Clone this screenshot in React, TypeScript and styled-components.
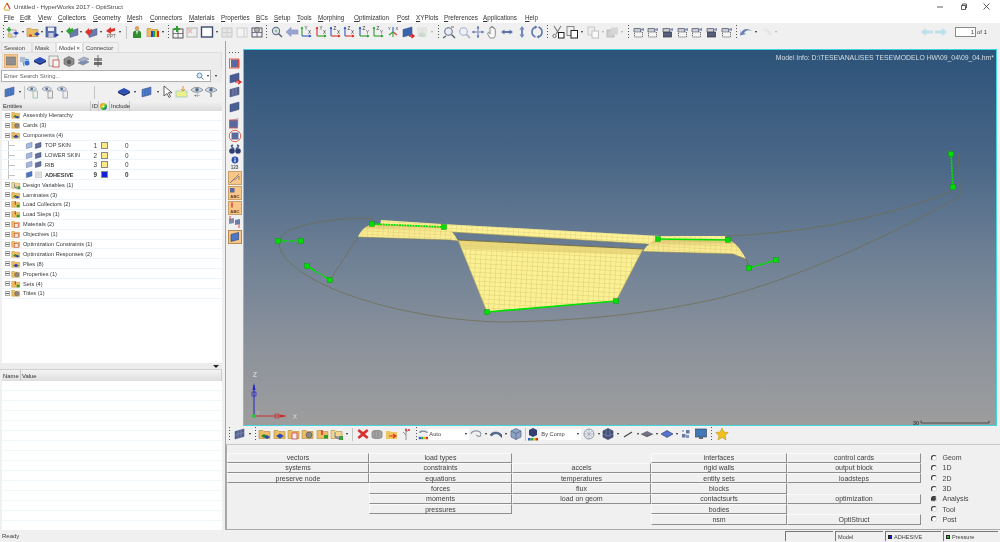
import React from 'react';
import styled, { createGlobalStyle } from 'styled-components';

const Global = createGlobalStyle`
  html, body { margin: 0; padding: 0; width: 1000px; height: 542px; overflow: hidden; background: #f0f0f0; }
  body { font-family: "Liberation Sans", Arial, sans-serif; color: #333; }
  #root { width: 1000px; height: 542px; }
`;

const Page = styled.div`display:flex;flex-direction:column;width:1000px;height:542px;background:#f0f0f0;filter:blur(.3px);`;
const TitleBar = styled.div`height:11px;background:#fff;display:flex;align-items:center;padding-left:3px;gap:3px;font-size:6.2px;color:#444;padding-top:1px;`;
const WinControls = styled.div`margin-left:auto;display:flex;gap:14px;padding-right:9px;align-items:center;`;
const MenuBar = styled.div`height:11px;background:#fff;display:flex;align-items:center;padding-left:4px;font-size:6.3px;color:#333;`;
const MenuItem = styled.span<{ $w: number }>`width:${p => p.$w}px;white-space:nowrap;`;
const TopBar = styled.div`height:18px;display:flex;align-items:center;background:#f0f0f0;`;
const Slot = styled.div<{ $w: number; $dim?: boolean }>`
  width:${p => p.$w}px;flex:none;display:flex;align-items:center;justify-content:center;height:15px;
  opacity:${p => (p.$dim ? 0.35 : 1)};
  svg{flex:none;}
`;
const Caret = styled.div`width:0;height:0;border-left:1.5px solid transparent;border-right:1.5px solid transparent;border-top:2px solid #222;`;
const Grip = styled.div`width:1px;height:14px;background:repeating-linear-gradient(to bottom,#555 0 1px,transparent 1px 3px);`;
const Sep = styled.div`width:1px;height:13px;background:#c4c4c4;`;
const Pager = styled.div`margin-left:auto;display:flex;align-items:center;padding-right:13px;font-size:6px;color:#444;`;
const PagerInput = styled.div`width:18px;height:8px;margin:0 1px 0 7px;background:#fff;border:1px solid #8a8a8a;text-align:right;line-height:8px;padding-right:1px;box-sizing:content-box;font-size:6px;`;

const Body = styled.div`flex:1;display:flex;min-height:0;`;
const LeftCol = styled.div`flex:none;display:flex;flex-direction:column;border-right:1px solid #a4a4a4;padding-right:3px;box-sizing:content-box;width:222px;`;
const TabRow = styled.div`height:11px;display:flex;align-items:flex-end;padding-left:1px;font-size:5.9px;color:#444;`;
const Tab = styled.div<{ $w: number; $on?: boolean }>`
  width:${p => p.$w}px;height:10px;display:flex;align-items:center;padding-left:2px;box-sizing:border-box;
  background:${p => (p.$on ? '#fbfbfb' : '#f0f0f0')};border:1px solid #e0e0e0;border-bottom:none;justify-content:space-between;padding-right:2px;
`;
const IconStrip = styled.div`height:17px;display:flex;align-items:center;background:#ececec;margin-left:2px;border:1px solid #dedede;border-bottom:none;box-sizing:border-box;`;
const SearchRow = styled.div`height:14px;display:flex;align-items:center;background:#ececec;padding:0 2px 0 1px;`;
const SearchBox = styled.div`width:210px;height:12px;background:#fff;border:1px solid #b0b0b0;box-sizing:border-box;display:flex;align-items:center;justify-content:space-between;padding:0 1px 0 2px;font-size:5.9px;color:#666;`;
const SearchTail = styled.div`flex:none;display:flex;align-items:center;gap:3px;`;
const EntityTools = styled.div`height:18px;display:flex;align-items:center;background:#f0f0f0;padding-left:3px;`;
const GridHead = styled.div`height:10px;display:flex;align-items:center;background:linear-gradient(#f2f2f2,#dcdcdc);font-size:5.9px;color:#333;margin-left:2px;`;
const HeadCell = styled.div<{ $w: number }>`width:${p => p.$w}px;flex:none;height:100%;display:flex;align-items:center;padding-left:1px;box-sizing:border-box;border-right:1px solid #c8c8c8;`;
const TreeBox = styled.div`height:252px;background:#fff;margin-left:2px;box-sizing:border-box;`;
const Row = styled.div<{ $bold?: boolean }>`
  height:9.9px;display:flex;align-items:center;position:relative;font-size:5.6px;color:#3a3a3a;
  font-weight:${p => (p.$bold ? 700 : 400)};border-bottom:1px solid #eef5fa;box-sizing:border-box;
`;
const Expander = styled.div`width:5px;height:5px;margin:0 0 0 3px;border:1px solid #aaa;box-sizing:border-box;position:relative;flex:none;background:#fff;
  &::after{content:'';position:absolute;left:0;right:0;top:1px;height:1px;background:#666;}
`;
const Guide = styled.div`width:16px;height:100%;margin-left:6px;flex:none;border-left:1px solid #c4c4c4;position:relative;
  &::after{content:'';position:absolute;left:0;top:50%;width:6px;height:1px;background:#c4c4c4;}
`;
const CompIcon = styled.svg`width:9px;height:9px;flex:none;`;
const TreeIcon = styled.svg`width:10px;height:10px;flex:none;margin:0 2px 0 1px;`;
const RowLabel = styled.span<{ $w: number }>`width:${p => p.$w}px;flex:none;white-space:nowrap;margin-left:${p => (p.$w < 100 ? 2 : 0)}px;`;
const IdCell = styled.span`width:9px;text-align:right;flex:none;font-size:6.4px;`;
const Swatch = styled.div<{ $c: string }>`width:7px;height:7px;margin-left:4px;background:${p => p.$c};border:1px solid #888;box-sizing:border-box;flex:none;`;
const IncludeCell = styled.span`margin-left:17px;font-size:6.4px;`;
const Divider = styled.div`height:6px;display:flex;justify-content:flex-end;align-items:center;padding-right:3px;background:#ececec;border-bottom:1px solid #cfcfcf;`;
const DownMark = styled.div`width:0;height:0;border-left:3px solid transparent;border-right:3px solid transparent;border-top:3px solid #222;`;
const NameHead = styled(GridHead)`height:11px;background:linear-gradient(#f4f4f4,#dedede);`;
const NameBody = styled.div`flex:1;margin-left:2px;background:repeating-linear-gradient(to bottom,#fff 0 9px,#f0f7fa 9px 10px);`;

const RightCol = styled.div`flex:1;display:flex;flex-direction:column;min-width:0;`;
const Gutter = styled.div`height:8px;flex:none;`;
const ViewRow = styled.div`height:377px;flex:none;display:flex;`;
const VBar = styled.div`width:17px;flex:none;display:flex;flex-direction:column;align-items:center;background:#f0f0f0;`;
const VSlot = styled.div<{ $h: number }>`height:${p => p.$h}px;width:100%;flex:none;display:flex;align-items:center;justify-content:center;`;
const HGrip = styled.div`width:12px;height:1px;background:repeating-linear-gradient(to right,#555 0 1px,transparent 1px 3px);`;
const Small123 = styled.div`font-size:4.6px;font-weight:700;color:#555;line-height:5px;text-align:center;`;
const Viewport = styled.div`
  width:754px;flex:none;position:relative;box-sizing:border-box;border:1px solid #42d6de;overflow:hidden;
  background:linear-gradient(to bottom,#2c5379 0%,#4a6787 30%,#6e8095 55%,#8d939c 80%,#9d9d9d 100%);
`;
const Canvas = styled.svg`display:block;width:752px;height:375px;`;
const ModelInfo = styled.div`position:absolute;top:3.5px;right:2px;font-size:6.85px;color:#d8dfe6;white-space:nowrap;`;
const LowBar = styled.div`height:18px;flex:none;display:flex;align-items:center;padding-bottom:2px;box-sizing:border-box;`;
const Combo = styled.div`width:41px;height:11px;flex:none;background:#fff;display:flex;align-items:center;justify-content:space-between;padding:0 2px 0 1px;box-sizing:border-box;font-size:5.7px;color:#444;`;
const PanelArea = styled.div`flex:1;display:flex;margin-top:0;border-top:1px solid #c8c8c8;`;
const MainPanel = styled.div`flex:1;display:flex;padding:7.5px 0 0 0;border-bottom:1px solid #aaa;border-left:1px solid #aaa;`;
const BtnGrid = styled.div`
  display:grid;grid-auto-flow:column;grid-template-columns:142px 143px 139px 136px 134px;grid-template-rows:repeat(7,10.3px);
  width:694px;flex:none;height:73px;
`;
const Btn = styled.div<{ $flat?: boolean }>`
  display:flex;align-items:center;justify-content:center;font-size:7px;color:#3f3f3f;box-sizing:border-box;
  ${p => (p.$flat ? '' : 'border-right:1px solid #8e8e8e;border-bottom:1px solid #8e8e8e;border-top:1px solid #fafafa;border-left:1px solid #fafafa;')}
`;
const Radios = styled.div`display:grid;grid-auto-rows:10.3px;padding-left:8px;`;
const RadioRow = styled.div`display:flex;align-items:center;font-size:7px;color:#444;gap:5.5px;`;
const Radio = styled.div<{ $on?: boolean }>`
  width:4px;height:4px;border-radius:50%;background:${p => (p.$on ? '#444' : '#fff')};flex:none;
  border-left:1px solid #333;border-top:1px solid #333;border-right:1px solid #ddd;border-bottom:1px solid #ddd;box-sizing:content-box;margin-left:2px;
`;
const StatusBar = styled.div`height:12px;flex:none;display:flex;align-items:center;font-size:6px;color:#444;`;
const StatusText = styled.div`margin-right:auto;padding-left:2px;`;
const StatusCell = styled.div<{ $w: number }>`
  width:${p => p.$w}px;height:10px;margin-right:2px;flex:none;display:flex;align-items:center;gap:2px;padding-left:2px;box-sizing:border-box;font-size:5.6px;
  border-left:1px solid #777;border-top:1px solid #777;
`;
const StatusDot = styled.div<{ $c: string }>`width:4px;height:4px;background:${p => p.$c};border:0.5px solid #222;box-sizing:border-box;`;

const S = 14;
const Ic: React.FC<{ children: React.ReactNode; s?: number }> = ({ children, s = S }) => (
  <svg width={s} height={s} viewBox="0 0 14 14">{children}</svg>
);
const Plate = ({ c = '#5a74b4' }: { c?: string }) => <path d="M2 4.5 11 2v7.5L2 12z" fill={c} stroke="#3a4b80" strokeWidth=".5" />;
const Folder = ({ c = '#eebd63' }: { c?: string }) => <path d="M1 3.5h4l1 1h6v7H1z" fill={c} stroke="#b08a3a" strokeWidth=".6" />;
const Axes = ({ v, h, lv, lh }: { v: string; h: string; lv: string; lh: string }) => (
  <Ic>
    <path d="M3 2v9" fill="none" stroke={v} strokeWidth="1.1" />
    <path d="M3 11h9" stroke={h} strokeWidth="1.1" />
    <path d="M1.6 4 3 1.5 4.4 4z" fill={v} /><path d="M10 9.6 12.6 11 10 12.4z" fill={h} />
    <text x="5.5" y="4.5" fontSize="4.5" fill="#333" fontFamily="Liberation Sans">{lv}</text>
    <text x="9" y="9" fontSize="4.5" fill="#333" fontFamily="Liberation Sans">{lh}</text>
  </Ic>
);
const Eye = ({ t }: { t?: string }) => (
  <Ic>
    <path d="M1 5c3-3.500 8-3.500 12 0-4 3-9 3-12 0z" fill="#d8dde4" stroke="#5e6f80" strokeWidth=".7" />
    <circle cx="7" cy="4.800" r="1.800" fill="#4f6a8c" />
    {t && <text x="7" y="12" fontSize="4.500" textAnchor="middle" fill="#444" fontFamily="Liberation Sans">{t}</text>}
  </Ic>
);
const EyeDoc = ({ g }: { g: string }) => (
  <Ic>
    <path d="M0 4c2.500-3 7-3 9.500 0-2.500 2.500-7 2.500-9.500 0z" fill="#dfe3e8" stroke="#69788a" strokeWidth=".6" />
    <circle cx="4.700" cy="3.800" r="1.400" fill="#5a7293" />
    <rect x="6" y="6" width="4.500" height="7" fill="#eee" stroke={g} strokeWidth=".7" />
  </Ic>
);
const Cam = ({ dark }: { dark?: boolean }) => (
  <Ic>
    <path d="M2 7V3.500h6.500V7" fill="#c7ccd6" stroke="#4c4f5c" strokeWidth=".7" />
    <path d="M8.500 4 12 3v3l-3.500-1z" fill="#7d8db8" />
    <rect x="2.500" y="7" width="8" height="5" fill={dark ? '#55607e' : '#f5f5f5'} stroke="#333" strokeWidth=".7" strokeDasharray={dark ? undefined : '1.200 .8'} />
  </Ic>
);

const icons: Record<string, React.ReactNode> = {
  imp: <Ic><rect x="3" y="5" width="7" height="7" fill="#e6e6ec" stroke="#666" strokeWidth=".5" /><path d="M3 2v4M1 4l2 2 2-2" stroke="#2da52d" fill="none" strokeWidth="1.400" /><path d="M7 8 10 6.500 13 8l-3 2z" fill="#2a4bb0" /><rect x="2" y="9" width="4" height="3" fill="#f2cf6c" stroke="#997" strokeWidth=".4" /></Ic>,
  open: <Ic><Folder /><path d="M8 9l3-2 3 2-3 2z" fill="#2a4bb0" /><path d="M3 9.500h3v2H3z" fill="#d8402a" /></Ic>,
  save: <Ic><rect x="1" y="2" width="10" height="10" fill="#5a74b4" stroke="#2e3f78" strokeWidth=".6" /><rect x="3" y="2.500" width="6" height="3.500" fill="#f0f0f4" /><rect x="3.500" y="8" width="5" height="4" fill="#ccd" /><path d="M9 10l2.500-1.500L14 10l-2.500 1.500z" fill="#263f9f" /></Ic>,
  plateG: <Ic><path d="M5 6l8-2.500V10L5 12.500z" fill="#6c79ac" stroke="#3a4b80" strokeWidth=".4" /><path d="M1 6l4-4v2l3-1v4l-3 1v2z" fill="#2fa52f" /></Ic>,
  plateR: <Ic><path d="M5 6l8-2.500V10L5 12.500z" fill="#6c79ac" stroke="#3a4b80" strokeWidth=".4" /><path d="M1 7l4-4v2l3-1v4l-3 1v2z" fill="#d9352c" /></Ic>,
  ppt: <Ic><path d="M2 6l5-4v2l4-1v3l-4 1v2z" fill="#d9352c" /><text x="7.500" y="13" fontSize="4.500" textAnchor="middle" fill="#555" fontFamily="Liberation Sans">PPT</text></Ic>,
  person: <Ic><circle cx="7" cy="3.200" r="2.200" fill="#d8a468" /><path d="M3 13V8c0-2 2-2.500 4-2.500s4 .5 4 2.500v5z" fill="#2f8f2f" /><path d="M6 6h2l-1 4z" fill="#eee" /></Ic>,
  fcolor: <Ic><Folder /><rect x="5" y="6" width="2" height="6" fill="#2343c8" /><rect x="7" y="6" width="2" height="6" fill="#23a840" /><rect x="9" y="6" width="2" height="6" fill="#e8c820" /><rect x="11" y="6" width="2" height="6" fill="#d82a20" /></Ic>,
  gridPlus: <Ic><rect x="2" y="4" width="10" height="9" fill="#f4f4f8" stroke="#333" strokeWidth=".8" /><path d="M7 4v9M2 8.500h10" stroke="#333" strokeWidth=".6" /><path d="M6 1v6M3 4h6" stroke="#2d9f2d" strokeWidth="2" /></Ic>,
  gridX: <Ic><rect x="2" y="3" width="10" height="9" fill="#efefef" stroke="#b0b0b0" /><path d="M3 4l4 4m0-4L3 8" stroke="#e9b9b9" strokeWidth="1.400" /></Ic>,
  square: <Ic><rect x="1.500" y="2" width="11" height="10" fill="#fff" stroke="#3b4a72" strokeWidth="1.400" /></Ic>,
  dis1: <Ic><rect x="2" y="3" width="10" height="9" fill="#e6e6e6" stroke="#c6c6c6" /><path d="M7 4v7M3 7.500h8" stroke="#cfcfcf" /></Ic>,
  dis2: <Ic><rect x="2" y="3" width="10" height="9" fill="#f4f4f4" stroke="#cdcdcd" /><path d="M9 3v9" stroke="#cdcdcd" /></Ic>,
  gridGear: <Ic><rect x="2" y="3" width="10" height="9" fill="#eef" stroke="#333" strokeWidth=".8" /><path d="M7 3v9M2 7.500h10" stroke="#333" strokeWidth=".6" /><circle cx="7" cy="5" r="2.600" fill="#aaa" stroke="#555" strokeWidth=".6" /></Ic>,
  zoomIn: <Ic><circle cx="6" cy="6" r="3.600" fill="#e3e8f0" stroke="#68708a" strokeWidth="1.100" /><path d="M8.500 8.500 12 12" stroke="#5c6270" strokeWidth="1.500" /><path d="M4.500 6h3M6 4.500v3" stroke="#4a5" strokeWidth=".6" /></Ic>,
  diamond: <Ic><path d="M1 7 6 2.500v2.400h7v4.200H6v2.400z" fill="#9aa6d0" stroke="#7a84b0" strokeWidth=".5" /></Ic>,
  triad: <Ic><path d="M7 7V2" stroke="#2b5fcf" strokeWidth="1.100" /><path d="M7 7l4 3" stroke="#d33" strokeWidth="1.100" /><path d="M7 7l-4 3" stroke="#2da52d" strokeWidth="1.100" /><path d="M7 7v5" stroke="#2da52d" strokeWidth="1.100" /><text x="2" y="5" fontSize="4" fill="#333" fontFamily="Liberation Sans">Y</text><text x="9.500" y="5" fontSize="4" fill="#333" fontFamily="Liberation Sans">X</text></Ic>,
  plateArrow: <Ic><Plate c="#3a63ad" /><path d="M8 11h5M10.500 9l2.500 2-2.500 2" stroke="#d92020" strokeWidth="1.300" fill="none" /></Ic>,
  disPerson: <Ic><rect x="2" y="2" width="10" height="10" fill="#cdd7cd" /><path d="M4 12V9c0-2 6-2 6 0v3z" fill="#8fb08f" /><circle cx="7" cy="5" r="2" fill="#d8c8b0" /></Ic>,
  zoomF: <Ic><circle cx="6.500" cy="6.500" r="3.800" fill="#e7ecf3" stroke="#6a7390" strokeWidth="1.100" /><path d="M4 11 1 13M9.500 9.500 13 13" stroke="#515a70" strokeWidth="1.300" /><path d="M9 2h3" stroke="#333" strokeWidth=".7" /></Ic>,
  zoomS: <Ic><circle cx="6.500" cy="6.500" r="3.800" fill="#eef1f7" stroke="#a6b0c8" strokeWidth="1.100" /><path d="M9.500 9.500 13 13" stroke="#99a3bc" strokeWidth="1.300" /></Ic>,
  cross: <Ic><path d="M7 1v12M1 7h12" stroke="#7b8ebb" strokeWidth="1.100" /><path d="M7 1 5.600 3.500h2.800zM7 13l-1.400-2.500h2.800zM1 7l2.500-1.400v2.800zM13 7l-2.500-1.400v2.800z" fill="#5e77ac" /></Ic>,
  hand: <Ic><path d="M4 13C2 10 1 8 2 7.500s2 1.500 2 1.500V3c0-1 1.300-1 1.300 0v-1c0-1 1.400-1 1.400 0v1c0-1 1.300-1 1.300 0v1c0-1 1.300-.8 1.300.2V9c0 2-.5 3-1 4z" fill="#f7f7f7" stroke="#666" strokeWidth=".7" /></Ic>,
  lr: <Ic><path d="M1 7l3.500-2.500v1.500h5V4.500L13 7 9.500 9.500V8h-5v1.500z" fill="#5e74ad" /></Ic>,
  ud: <Ic><path d="M7 1l2.500 3.500H8v5h1.500L7 13 4.500 9.500H6v-5H4.500z" fill="#7286bb" /></Ic>,
  rot: <Ic><path d="M5.500 2C3 3 2 5 2 7s1 4 3.500 5M8.500 2C11 3 12 5 12 7s-1 4-3.500 5" fill="none" stroke="#5d74ad" strokeWidth="1.600" /><path d="M5 .5 7.500 2 5 4zM9 10l-2.500 2L9 13.500z" fill="#5d74ad" /></Ic>,
  cut: <Ic><path d="M3 1l5 8M10 1 5 9" stroke="#777" strokeWidth="1.100" /><circle cx="3.500" cy="11" r="1.700" fill="none" stroke="#777" /><rect x="7.500" y="7.500" width="5.500" height="5.500" fill="#fff" stroke="#222" /></Ic>,
  copy: <Ic><rect x="2" y="1.500" width="7" height="9" fill="#eee" stroke="#888" /><rect x="6" y="5.500" width="6.500" height="7.500" fill="#fff" stroke="#222" /></Ic>,
  dis3: <Ic><rect x="2" y="2" width="6.500" height="8" fill="#eee" stroke="#c8c8c8" /><rect x="6" y="6" width="6.500" height="7" fill="#fafafa" stroke="#c0c0c0" /></Ic>,
  dis4: <Ic><rect x="2" y="5" width="7" height="7" fill="#cfcfcf" stroke="#bdbdbd" /><rect x="6" y="2.500" width="7" height="7" fill="#d6d6d6" /></Ic>,
  undo: <Ic><path d="M2 8c2-5 7-5 11-2-4-1.500-6-1-8 2l2 1-6 1.500L2 5z" fill="#6b7fb4" /></Ic>,
  redo: <Ic><path d="M12 8c-2-5-7-5-11-2 4-1.500 6-1 8 2l-2 1 6 1.500L12 5z" fill="#cfd4de" /></Ic>,
  boxFile: <Ic><Folder /><path d="M3 9l3-2 3 2-3 2z" fill="#2a8f2a" /><path d="M6 10l3-2 3 2-3 2z" fill="#2a4bb0" /></Ic>,
  boxFile2: <Ic><Folder /><path d="M3 9l4-2.500L11 9l-4 2.500z" fill="#2a4bb0" /></Ic>,
  boxMat: <Ic><Folder /><rect x="5" y="6" width="5" height="6" fill="#eee" stroke="#c33" strokeWidth=".7" /></Ic>,
  boxProp: <Ic><Folder /><circle cx="8" cy="8" r="3" fill="#888" stroke="#444" strokeWidth=".5" /></Ic>,
  boxLoad: <Ic><Folder /><path d="M6 3v5" stroke="#d22" strokeWidth="1.400" /><rect x="8" y="8" width="4" height="3.500" fill="#2a9f2a" /></Ic>,
  boxSys: <Ic><Folder c="#f2d68d" /><path d="M5 5v5l4 2M5 10h4" stroke="#3158b8" strokeWidth=".7" fill="none" /><rect x="9" y="9" width="4" height="4" fill="#3f9f3f" /></Ic>,
  red: <Ic><path d="M3 2l4 3 4-3 1.500 2L9 7l3.500 3L11 12 7 9l-4 3-1.500-2L5 7 1.500 4z" fill="#d93030" /></Ic>,
  cyl: <Ic><path d="M2 5c0-2 10-2 10 0v5c0 2-10 2-10 0z" fill="#a4a4a4" stroke="#666" strokeWidth=".6" /><path d="M5 3.500v7M8 3.500v7" stroke="#777" strokeWidth=".5" /></Ic>,
  orangeBox: <Ic><path d="M1 4h4l1 1h6v7H1z" fill="#f0c660" /><path d="M4 9h6M8 7l3 2-3 2" stroke="#d8341f" fill="none" strokeWidth="1.100" /></Ic>,
  branch: <Ic><path d="M7 1v12M7 5l3-2M7 8 4 5" stroke="#7a7a7a" strokeWidth=".8" /><circle cx="7" cy="3" r="1.100" fill="#d33" /><circle cx="10" cy="3" r="1" fill="#d33" /></Ic>,
  loop: <Ic><path d="M2 7c0-3 6-4 9-2 2 2 0 5-1 4.500S7 8 7 8" fill="none" stroke="#8d98a8" strokeWidth="1.100" /></Ic>,
  shell: <Ic><path d="M1 8c2-4 9-4 12 0l-2 1c-2-3-6-3-8 0z" fill="#4e6a90" stroke="#3a4d6e" strokeWidth=".5" /><path d="M11 9 13 8v3z" fill="#384f75" /></Ic>,
  cube: <Ic><path d="M2 4l5-2.500L12 4v6l-5 2.500L2 10z" fill="#8fa3c4" stroke="#46587c" strokeWidth=".6" /><path d="M2 4l5 2.500L12 4M7 6.500v6" stroke="#46587c" strokeWidth=".6" fill="none" /></Ic>,
  sphere: <Ic><circle cx="7" cy="7" r="5" fill="#e7eaef" stroke="#6f7b8d" strokeWidth=".7" /><path d="M2 7h10M7 2v10M3.500 3.500 10.500 10.500M10.500 3.500 3.500 10.500" stroke="#8e97a4" strokeWidth=".5" /></Ic>,
  darkCube: <Ic><path d="M2 4l5-2.500L12 4v6l-5 2.500L2 10z" fill="#47537e" stroke="#2a3356" strokeWidth=".6" /><path d="M5 3v7M9 3v7M2 7l5 2 5-2" stroke="#8b93b5" strokeWidth=".5" fill="none" /></Ic>,
  dash: <Ic><path d="M3 10 11 5" stroke="#444" strokeWidth="1.200" /></Ic>,
  flatGray: <Ic><path d="M1 7 7 4l6 3-6 3z" fill="#6f7480" /><path d="M1 7l6 2.500L13 7" stroke="#444" fill="none" strokeWidth=".6" /></Ic>,
  flatBlue: <Ic><path d="M1 7 7 3.500 13 7 7 10.500z" fill="#5873c9" stroke="#2d3c79" strokeWidth=".6" /></Ic>,
  quads: <Ic><rect x="2" y="7" width="3.500" height="3.500" fill="#6679a6" /><rect x="6" y="3" width="3.500" height="3.500" fill="#6679a6" /><rect x="6" y="8" width="3" height="3" fill="#8494bd" /><rect x="2" y="3" width="2" height="2" fill="#a7b2cf" /></Ic>,
  monitor: <Ic><rect x="1.500" y="2" width="11" height="8" fill="#3f78b5" stroke="#3b4a66" strokeWidth=".7" /><rect x="5" y="10" width="4" height="2" fill="#667" /></Ic>,
  star: <Ic><path d="M7 1l1.900 4 4.400.5-3.200 3 .9 4.300L7 10.600 3 12.800l.9-4.300-3.200-3 4.400-.5z" fill="#f0c020" stroke="#b08a10" strokeWidth=".5" /></Ic>,
  comboIcon: <Ic s={11}><path d="M1 4c2-3 8-3 12 0l-2 1c-3-2-6-2-8 0z" fill="#7d8da6" /><rect x="1" y="10" width="3" height="3" fill="#2f5fc0" /><rect x="4" y="10" width="3" height="3" fill="#2fa840" /><rect x="7" y="10" width="3" height="3" fill="#e0c020" /><rect x="10" y="10" width="3" height="3" fill="#d83020" /></Ic>,
  comboIcon2: <Ic><path d="M3 3l4-2 4 2v5l-4 2-4-2z" fill="#343f70" /><rect x="2" y="11" width="2.500" height="2.500" fill="#2f5fc0" /><rect x="4.500" y="11" width="2.500" height="2.500" fill="#2fa840" /><rect x="7" y="11" width="2.500" height="2.500" fill="#e0c020" /><rect x="9.500" y="11" width="2.500" height="2.500" fill="#d83020" /></Ic>,
  plateSolid: <Ic><Plate c="#56638f" /><path d="M5 3.800v7M8 3v7.500M2 8l9-2.500" stroke="#8e98b8" strokeWidth=".5" /></Ic>,
  plateLight: <Ic><Plate c="#a9bde2" /><path d="M5 3.800v7M8 3v7.500" stroke="#8ea3cc" strokeWidth=".5" /></Ic>,
  activeBox: <Ic><rect x="0" y="0" width="14" height="14" fill="#f5c58e" stroke="#e2a45e" /><rect x="2.500" y="3" width="9" height="8" fill="#8f8f8f" stroke="#666" strokeWidth=".5" /></Ic>,
  net: <Ic><rect x="2" y="3" width="5" height="5" fill="#b3bdd2" /><circle cx="9" cy="9" r="2.500" fill="#3b6bd0" /><path d="M7 5l4 1M5 8l1 4" stroke="#1ba0d8" /></Ic>,
  eyeDis: <Ic><path d="M1 6l6-3 6 3-6 3z" fill="#2a4fb8" /><path d="M1 6v2l6 3 6-3V6L7 9z" fill="#1b2f78" /></Ic>,
  matBox: <Ic><rect x="2" y="2" width="9" height="10" fill="#eee" stroke="#7a7a7a" strokeWidth=".6" /><rect x="6" y="6" width="6" height="7" fill="#f6f6f6" stroke="#c0302a" strokeWidth=".7" /></Ic>,
  gearBox: <Ic><path d="M2 5l5-2.500L12 5v5l-5 2.500L2 10z" fill="#8f8f8f" stroke="#444" strokeWidth=".5" /><circle cx="7" cy="8" r="2.200" fill="#5b5b5b" /></Ic>,
  sheets: <Ic><path d="M2 9l6-3 5 2-6 3z" fill="#7d8fb8" stroke="#566" strokeWidth=".4" /><path d="M2 6l6-3 5 2-6 3z" fill="#a8b4cf" stroke="#667" strokeWidth=".4" /></Ic>,
  stack: <Ic><path d="M3 4h8v3H3z" fill="#8e8e8e" /><path d="M3 8h8v3H3z" fill="#6e6e6e" /><path d="M7 1v12" stroke="#555" strokeWidth=".8" /></Ic>,
  cursor: <Ic><path d="M3 1v10l3-2.500 2 4 1.500-1-2-3.800h3.500z" fill="#fff" stroke="#222" strokeWidth=".7" /></Ic>,
  yellowTag: <Ic><rect x="1" y="6" width="11" height="6" fill="#eef08a" stroke="#9cc" strokeWidth=".8" /><path d="M8 1v5M6 4l2 2 2-2" stroke="#e09030" strokeWidth="1" fill="none" /></Ic>,
  eyeQ: <EyeDoc g="#90b090" />,
  eyeQ2: <EyeDoc g="#808080" />,
  eyeQ3: <EyeDoc g="#9090c0" />,
  eye1: <Eye t="+/-" />,
  eye2: <Eye t="9" />,
  plate: <Ic><Plate c="#4f7cc6" /><path d="M5 3.800v7M8 3v7.500" stroke="#2f5ba0" strokeWidth=".5" /></Ic>,
  panelPlate: <Ic><rect x="3" y="3.500" width="8.500" height="8" fill="#5b6a9e" /><rect x="1.500" y="3" width="9" height="9" fill="none" stroke="#ea4a3a" strokeWidth=".9" /></Ic>,
  panelPlate2: <Ic><Plate c="#4a5a92" /><path d="M7 11h6M10 9l3 2-3 2" stroke="#e02020" strokeWidth="1.200" fill="none" /></Ic>,
  panelPlate3: <Ic><Plate c="#55618f" /><path d="M5 3.800v7M8 3v7.500" stroke="#a5adc6" strokeWidth=".5" /></Ic>,
  panelPlate4: <Ic><Plate c="#475692" /><path d="M4 3.800v7M6 3.300v7.500M8 3v7.500M10 2.500v7.500" stroke="#8fa" strokeOpacity=".25" strokeWidth=".5" /></Ic>,
  panelBox: <Ic><path d="M2.500 5l8-2.500v7l-8 2.500z" fill="#c8ccd6" /><rect x="1.500" y="5" width="8" height="8" fill="#5b6a9e" stroke="#e2564a" strokeWidth=".9" /></Ic>,
  panelCircle: <Ic><circle cx="7" cy="7" r="5.700" fill="#fff" stroke="#e0503c" strokeWidth=".9" /><rect x="3.500" y="3.500" width="7" height="7" fill="#5b6a9e" /></Ic>,
  binoc: <Ic><circle cx="4" cy="8" r="2.800" fill="#2e3f73" /><circle cx="10" cy="8" r="2.800" fill="#2e3f73" /><path d="M3 3l3 3M11 3 8 6M3 3l2-1M11 3 9 2" stroke="#42588a" strokeWidth="1.500" /></Ic>,
  info: <Ic s={8}><circle cx="7" cy="7" r="6" fill="#2e4fae" /><rect x="6" y="6" width="2" height="5" fill="#fff" /><rect x="6" y="3" width="2" height="2" fill="#fff" /></Ic>,
  orangeAxis: <Ic><rect x=".5" y=".5" width="13" height="13" fill="#f7c68a" stroke="#caa068" /><path d="M2 12 11 3M11 5v4" stroke="#8c6b44" strokeWidth=".7" /><path d="M2 12 5 9l3-1 3-3" stroke="#4a6aa2" strokeWidth=".6" fill="none" /></Ic>,
  orangeAbc: <Ic><rect x=".5" y=".5" width="13" height="13" fill="#f7c68a" stroke="#caa068" /><rect x="2" y="2" width="4.500" height="4.500" fill="#55679c" /><text x="7" y="12" fontSize="4.300" fontWeight="700" textAnchor="middle" fill="#5a3b20" fontFamily="Liberation Sans">ABC</text></Ic>,
  orangeAbc2: <Ic><rect x=".5" y=".5" width="13" height="13" fill="#f7c68a" stroke="#caa068" /><path d="M4 1.500v5" stroke="#d81f1f" strokeWidth="1.200" /><text x="7" y="12" fontSize="4.300" fontWeight="700" textAnchor="middle" fill="#5a3b20" fontFamily="Liberation Sans">ABC</text></Ic>,
  planes: <Ic><path d="M1 4l5-1v5l-5 1z" fill="#7f8db4" /><path d="M7 5l5-1v5l-5 1z" fill="#6d7ca8" /><path d="M2 1v4M11 9v4" stroke="#d33" strokeWidth=".9" /></Ic>,
  orangePlate: <Ic><rect x=".5" y=".5" width="13" height="13" fill="#f7c68a" stroke="#b88c55" /><path d="M3 4.500l7.500-2v7l-7.500 2z" fill="#4a79c8" stroke="#263b6e" strokeWidth=".6" /></Ic>,
  arrowL: <Ic><path d="M1 7l5-4v2.500h7v3H6V11z" fill="#bfe0ea" /></Ic>,
  arrowR: <Ic><path d="M13 7 8 3v2.500H1v3h7V11z" fill="#bfe0ea" /></Ic>,
  wheel: <svg width="7" height="7" viewBox="0 0 14 14"><circle cx="7" cy="7" r="7" fill="url(#cw)" /><circle cx="7" cy="7" r="2" fill="#fff" /></svg>,
};

const renderItems = (list: string[]) =>
  list.map((tok, i) => {
    const [k, w, d] = tok.split(':');
    const wn = Number(w);
    if (k === 'G') return <Slot key={i} $w={wn}><Grip /></Slot>;
    if (k === 'D') return <Slot key={i} $w={wn} $dim={d === 'd'}><Caret /></Slot>;
    if (k === 'S') return <Slot key={i} $w={wn}><Sep /></Slot>;
    return <Slot key={i} $w={wn} $dim={d === 'd'}>{icons[k]}</Slot>;
  });

const menu: [string, string, number][] = [
  ['F', 'ile', 16], ['E', 'dit', 18], ['V', 'iew', 20], ['C', 'ollectors', 35], ['G', 'eometry', 34], ['M', 'esh', 23],
  ['C', 'onnectors', 39], ['M', 'aterials', 32], ['P', 'roperties', 35], ['B', 'Cs', 18], ['S', 'etup', 23], ['T', 'ools', 21],
  ['M', 'orphing', 36], ['O', 'ptimization', 43], ['P', 'ost', 19], ['X', 'YPlots', 28], ['P', 'references', 39], ['A', 'pplications', 42], ['H', 'elp', 20],
];

const top1 = [
  'G:6','imp:14','D:5.5','open:14','D:5.5','save:14','D:5.5','plateG:14','D:5.5','plateR:14','D:5.5','ppt:14','D:5.5','S:6',
  'person:16','fcolor:15','D:5','G:6','gridPlus:13','gridX:15','square:15','D:6','dis1:14','dis2:15','gridGear:15','G:5',
  'zoomIn:15','diamond:15',
];
const top2 = ['triad:15','plateArrow:15','disPerson:14:d','D:6:d','G:6','zoomF:15','zoomS:15','cross:14','hand:15','lr:14','ud:15','rot:15','G:7','cut:13','copy:15','D:6','dis3:15','D:5:d','dis4:14','D:6:d','G:6'];

const low1 = ['G:6','plateSolid:16','D:4','G:6','boxFile:14.4','boxFile2:14.4','boxMat:14.4','boxProp:14.4','boxLoad:14.4','boxSys:14.4','D:5','S:6','red:14.5','cyl:14.5','orangeBox:14.5','branch:14.5','G:6','comboIcon:9'];
const low2 = ['loop:14','D:5','shell:16','D:4','cube:16','S:2','comboIcon2:14'];
const low3 = ['sphere:16','D:4','darkCube:14','D:5','dash:15','D:5','flatGray:14','D:5','flatBlue:16','D:4','quads:15','monitor:14','G:6','star:16'];

const colA = ['vectors','systems','preserve node','','','',''];
const colB = ['load types','constraints','equations','forces','moments','pressures',''];
const colC = ['','accels','temperatures','flux','load on geom','',''];
const colD = ['interfaces','rigid walls','entity sets','blocks','contactsurfs','bodies','nsm'];
const colE = ['control cards','output block','loadsteps','','optimization','','OptiStruct'];

const tree = [
  { name: 'Assembly Hierarchy', k: 'boxFile' }, { name: 'Cards (3)', k: 'boxProp' }, { name: 'Components (4)', k: 'boxFile2' },
];
const tree2 = [
  { name: 'Design Variables (1)', k: 'boxSys' }, { name: 'Laminates (3)', k: 'boxFile' }, { name: 'Load Collectors (2)', k: 'boxLoad' },
  { name: 'Load Steps (1)', k: 'boxLoad' }, { name: 'Materials (2)', k: 'boxMat' }, { name: 'Objectives (1)', k: 'boxMat' },
  { name: 'Optimization Constraints (1)', k: 'boxMat' }, { name: 'Optimization Responses (2)', k: 'boxFile' }, { name: 'Plies (8)', k: 'boxFile2' },
  { name: 'Properties (1)', k: 'boxProp' }, { name: 'Sets (4)', k: 'boxLoad' }, { name: 'Titles (1)', k: 'boxProp' },
];
const comps: { name: string; id: number; c: string; bold?: boolean }[] = [
  { name: 'TOP SKIN', id: 1, c: '#fbe888' }, { name: 'LOWER SKIN', id: 2, c: '#fbe888' }, { name: 'RIB', id: 3, c: '#fbe888' },
  { name: 'ADHESIVE', id: 9, c: '#1020e0', bold: true },
];

const inner = (k: string) => (icons[k] as React.ReactElement<{ children: React.ReactNode }>).props.children;

const TreeRow: React.FC<{ name: string; k: string }> = ({ name, k }) => (
  <Row><Expander /><TreeIcon viewBox="0 0 14 14">{inner(k)}</TreeIcon><RowLabel $w={120}>{name}</RowLabel></Row>
);

const greens: [number, number, number, number, boolean?][] = [
  [278, 240, 301, 240, true], [307, 265, 330, 279, true], [372, 223, 444, 226, true], [487, 311, 616, 300], [658, 238, 728, 239], [749, 267, 776, 259, true], [951, 153, 953, 186, true],
];

const leftFlange = 'M358 236C361 229 366 224.500 372 223.500L444 226C451 228 455 234 458 240L450 239z';
const rightFlange = 'M643 250.500C648 243 652 239.500 658 238.500L728 239C736 241 741 249 746 258L733 253z';
const topSkin = 'M381 219 442 223 660 235 725 235 726 238 647 243 450 231 380 225z';
const rib = 'M458 239 643 248 616 300 487 311z';

const Model = () => (
  <Canvas viewBox="244 49 752 375">
    <defs>
      <pattern id="mesh" width="5.2" height="4.4" patternUnits="userSpaceOnUse" patternTransform="rotate(3)">
        <path d="M5.200 0V4.400M0 4.400H5.200" stroke="#c9b464" strokeWidth=".55" fill="none" />
      </pattern>
      <pattern id="mesh2" width="5.2" height="3.4" patternUnits="userSpaceOnUse" patternTransform="rotate(3)">
        <path d="M5.200 0V3.400M0 3.400H5.200" stroke="#cfb964" strokeWidth=".5" fill="none" />
      </pattern>
      <linearGradient id="fl" x1="0" y1="0" x2="0" y2="1"><stop offset="0" stopColor="#d9c56f" /><stop offset=".35" stopColor="#f8e98e" /><stop offset="1" stopColor="#fbef9a" /></linearGradient>
    </defs>
    <g fill="none" stroke="#6f6c4a" strokeWidth=".7">
      <path d="M373 218C340 216 300 222 285 232C272 242 282 258 303 272C340 297 420 319 500 321C580 320 650 313 720 297C800 277 900 230 960 195C960 180 959 165 958 152" />
      <path d="M723 235C790 233 880 220 952 190" />
      <path d="M330 279 358 236M746 258 749 267" />
    </g>
    <path d={topSkin} fill="#fdf297" />
    <path d={topSkin} fill="url(#mesh2)" />
    <path d="M450 231 647 243" stroke="#8a8452" strokeWidth=".6" />
    <path d={rib} fill="#fbf092" />
    <path d={rib} fill="url(#mesh)" />
    <path d="M458 239 643 248 640 254 463 248z" fill="#e4d074" opacity=".75" />
    <path d="M458 239 643 248" stroke="#6d6840" strokeWidth=".9" />
    <path d="M458 239 487 311M643 248 616 300" stroke="#b4a45c" strokeWidth=".6" />
    <path d={leftFlange} fill="url(#fl)" />
    <path d={leftFlange} fill="url(#mesh2)" />
    <path d="M358 236 450 239 458 240" stroke="#8a8452" strokeWidth=".6" fill="none" />
    <path d={rightFlange} fill="url(#fl)" />
    <path d={rightFlange} fill="url(#mesh2)" />
    <path d="M643 250.500 733 253 746 258" stroke="#8a8452" strokeWidth=".6" fill="none" />
    {greens.map(([a, b, c, d, dots], i) => (
      <g key={i}>
        <line x1={a} y1={b} x2={c} y2={d} stroke="#00e000" strokeWidth="1.700" strokeDasharray={dots ? '2 .7' : undefined} />
        <rect x={a - 2.500} y={b - 2.500} width="5" height="5" fill="#00dd00" stroke="#0a900a" strokeWidth=".4" />
        <rect x={c - 2.500} y={d - 2.500} width="5" height="5" fill="#00dd00" stroke="#0a900a" strokeWidth=".4" />
      </g>
    ))}
    <path d="M254 415V384" stroke="#2424c8" strokeWidth="1" />
    <path d="M252.500 389 254 382 255.500 389z" fill="#2424c8" />
    <rect x="252" y="391" width="4" height="4" fill="none" stroke="#2424c8" strokeWidth=".7" />
    <path d="M254 415H285" stroke="#c83030" strokeWidth="1" />
    <path d="M280 413.500 287 415 280 416.500z" fill="#c83030" />
    <rect x="275" y="413" width="4" height="4" fill="none" stroke="#c83030" strokeWidth=".7" />
    <circle cx="254" cy="415" r="2" fill="#30c040" />
    <text x="255" y="375.500" fontSize="6.500" fill="#e8e8e8" textAnchor="middle" fontFamily="Liberation Sans">Z</text>
    <text x="295" y="418" fontSize="6.500" fill="#d8d8d8" textAnchor="middle" fontFamily="Liberation Sans">X</text>
    <text x="258" y="414" fontSize="5" fill="#c8c8c8" textAnchor="middle" fontFamily="Liberation Sans">Y</text>
    <text x="913" y="423.500" fontSize="5.500" fontWeight="700" fill="#444" fontFamily="Liberation Sans">30</text>
    <path d="M921 419.500V422H989V419.500" stroke="#444" strokeWidth=".9" fill="none" />
  </Canvas>
);

const cell = (t: string, i: number, j: number) => <Btn key={`${j}-${i}`} $flat={!t}>{t}</Btn>;

export default function App() {
  return (
    <Page>
      <Global />
      <svg width="0" height="0" style={{ position: 'absolute' }}>
        <defs>
          <linearGradient id="cw" x1="0" y1="0" x2="1" y2="1"><stop offset="0" stopColor="#e02020" /><stop offset=".33" stopColor="#e8d020" /><stop offset=".66" stopColor="#20b040" /><stop offset="1" stopColor="#2040e0" /></linearGradient>
        </defs>
      </svg>
      <TitleBar>
        <svg width="8" height="9" viewBox="0 0 8 9"><path d="M4 1 1 7" stroke="#e8902a" strokeWidth="1.200" /><path d="M4 1l3 6" stroke="#d03a3a" strokeWidth="1.200" /><path d="M1 8h6" stroke="#c8b030" strokeWidth="1" /></svg>
        Untitled - HyperWorks 2017 - OptiStruct
        <WinControls>
          <svg width="9" height="9" viewBox="0 0 9 9"><path d="M1 5h6" stroke="#333" strokeWidth=".8" /></svg>
          <svg width="9" height="9" viewBox="0 0 9 9"><path d="M2.500 3.500h4v4h-4zM3.500 3.500V2h4v4H6.500" fill="none" stroke="#333" strokeWidth=".8" /></svg>
          <svg width="9" height="9" viewBox="0 0 9 9"><path d="M1.500 1.500l6 6M7.500 1.500l-6 6" stroke="#333" strokeWidth=".8" /></svg>
        </WinControls>
      </TitleBar>
      <MenuBar>
        {menu.map(([a, b, w], i) => <MenuItem key={i} $w={w}><u>{a}</u>{b}</MenuItem>)}
      </MenuBar>
      <TopBar>
        {renderItems(top1)}
        <Slot $w={14.4}><Axes v="#2e9f2e" h="#2f55c8" lv="Y" lh="X" /></Slot>
        <Slot $w={14.4}><Axes v="#d83030" h="#2e9f2e" lv="Y" lh="X" /></Slot>
        <Slot $w={14.4}><Axes v="#2f55c8" h="#d83030" lv="Z" lh="X" /></Slot>
        <Slot $w={14.4}><Axes v="#2f55c8" h="#d83030" lv="Z" lh="X" /></Slot>
        <Slot $w={14.4}><Axes v="#2f55c8" h="#2e9f2e" lv="Z" lh="Y" /></Slot>
        <Slot $w={14.4}><Axes v="#2e9f2e" h="#2e9f2e" lv="Z" lh="Y" /></Slot>
        {renderItems(top2)}
        {[false, false, true, false, false, true, false].map((d, i) => <Slot key={i} $w={14.67}><Cam dark={d} /></Slot>)}
        {renderItems(['G:6', 'undo:13', 'D:6', 'redo:14:d', 'D:6:d'])}
        <Pager>
          <Slot $w={14}>{icons.arrowL}</Slot>
          <Slot $w={14}>{icons.arrowR}</Slot>
          <PagerInput>1</PagerInput>of 1
        </Pager>
      </TopBar>
      <Body>
        <LeftCol>
          <TabRow>
            <Tab $w={31}>Session</Tab>
            <Tab $w={24}>Mask</Tab>
            <Tab $w={27} $on>Model <span>×</span></Tab>
            <Tab $w={36}>Connector</Tab>
          </TabRow>
          <IconStrip>{renderItems(['activeBox:15', 'net:14.5', 'eyeDis:14.5', 'matBox:14.5', 'gearBox:14.5', 'sheets:14.5', 'stack:14.5'])}</IconStrip>
          <SearchRow>
            <SearchBox>Enter Search String...
              <SearchTail>
                <svg width="8" height="8" viewBox="0 0 8 8"><circle cx="3.500" cy="3.500" r="2.500" fill="#dbeaf6" stroke="#4f86b8" strokeWidth=".9" /><path d="M5.500 5.500 7.500 7.500" stroke="#666" /></svg>
                <Caret />
              </SearchTail>
            </SearchBox>
            <Slot $w={9}><Caret /></Slot>
          </SearchRow>
          <EntityTools>
            {renderItems(['plate:14', 'D:6', 'S:3', 'eyeQ:15', 'eyeQ2:15', 'eyeQ3:15', 'S:46', 'eyeDis:14', 'D:8', 'plate:15', 'D:7', 'cursor:13', 'yellowTag:15', 'eye1:15', 'eye2:14'])}
          </EntityTools>
          <GridHead>
            <HeadCell $w={89}>Entities</HeadCell>
            <HeadCell $w={8}>ID</HeadCell>
            <HeadCell $w={11}>{icons.wheel}</HeadCell>
            <HeadCell $w={20}>Include</HeadCell>
          </GridHead>
          <TreeBox>
            {tree.map(t => <TreeRow key={t.name} {...t} />)}
            {comps.map(c => (
              <Row key={c.name} $bold={c.bold}>
                <Guide />
                <CompIcon viewBox="0 0 14 14">{inner(c.bold ? 'plate' : 'plateLight')}</CompIcon>
                <CompIcon viewBox="0 0 14 14">{inner(c.bold ? 'dis1' : 'plateSolid')}</CompIcon>
                <RowLabel $w={43}>{c.name}</RowLabel>
                <IdCell>{c.id}</IdCell>
                <Swatch $c={c.c} />
                <IncludeCell>0</IncludeCell>
              </Row>
            ))}
            {tree2.map(t => <TreeRow key={t.name} {...t} />)}
          </TreeBox>
          <Divider><DownMark /></Divider>
          <NameHead>
            <HeadCell $w={19}>Name</HeadCell>
            <HeadCell $w={201}>Value</HeadCell>
          </NameHead>
          <NameBody />
        </LeftCol>
        <RightCol>
          <Gutter />
          <ViewRow>
            <VBar>
              <VSlot $h={7}><HGrip /></VSlot>
              <VSlot $h={14}>{icons.panelPlate}</VSlot>
              <VSlot $h={15}>{icons.panelPlate2}</VSlot>
              <VSlot $h={14}>{icons.panelPlate3}</VSlot>
              <VSlot $h={15}>{icons.panelPlate4}</VSlot>
              <VSlot $h={15}>{icons.panelBox}</VSlot>
              <VSlot $h={14}>{icons.panelCircle}</VSlot>
              <VSlot $h={13}>{icons.binoc}</VSlot>
              <VSlot $h={8}>{icons.info}</VSlot>
              <VSlot $h={6}><Small123>123</Small123></VSlot>
              <VSlot $h={15}>{icons.orangeAxis}</VSlot>
              <VSlot $h={15}>{icons.orangeAbc}</VSlot>
              <VSlot $h={15}>{icons.orangeAbc2}</VSlot>
              <VSlot $h={14}>{icons.planes}</VSlot>
              <VSlot $h={15}>{icons.orangePlate}</VSlot>
            </VBar>
            <Viewport>
              <Model />
              <ModelInfo>Model Info: D:\TESE\ANALISES TESE\MODELO HW\09_04\09_04.hm*</ModelInfo>
            </Viewport>
          </ViewRow>
          <LowBar>
            {renderItems(low1)}
            <Combo>Auto<Caret /></Combo>
            {renderItems(low2)}
            <Combo>By Comp<Caret /></Combo>
            {renderItems(low3)}
          </LowBar>
          <PanelArea>
            <MainPanel>
              <BtnGrid>
                {[colA, colB, colC, colD, colE].map((col, j) => col.map((t, i) => cell(t, i, j)))}
              </BtnGrid>
              <Radios>
                {['Geom', '1D', '2D', '3D', 'Analysis', 'Tool', 'Post'].map(r => (
                  <RadioRow key={r}><Radio $on={r === 'Analysis'} />{r}</RadioRow>
                ))}
              </Radios>
            </MainPanel>
          </PanelArea>
        </RightCol>
      </Body>
      <StatusBar>
        <StatusText>Ready</StatusText>
        <StatusCell $w={48} />
        <StatusCell $w={48}>Model</StatusCell>
        <StatusCell $w={56}><StatusDot $c="#1020e0" />ADHESIVE</StatusCell>
        <StatusCell $w={55}><StatusDot $c="#20c020" />Pressure</StatusCell>
      </StatusBar>
    </Page>
  );
}
